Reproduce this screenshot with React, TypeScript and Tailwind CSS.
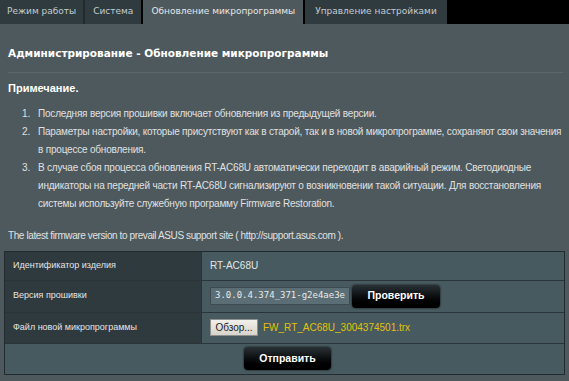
const tabs = [
  { label: "Режим работы", active: false },
  { label: "Система", active: false },
  { label: "Обновление микропрограммы", active: true },
  { label: "Управление настройками", active: false },
];

const notes = [
  "Последняя версия прошивки включает обновления из предыдущей версии.",
  "Параметры настройки, которые присутствуют как в старой, так и в новой микропрограмме, сохраняют свои значения в процессе обновления.",
  "В случае сбоя процесса обновления RT-AC68U автоматически переходит в аварийный режим. Светодиодные индикаторы на передней части RT-AC68U сигнализируют о возникновении такой ситуации. Для восстановления системы используйте служебную программу Firmware Restoration.",
];

const dejavu = { fontFamily: '"DejaVu Sans", Verdana, sans-serif' };

function DarkButton({ children, className }: { children: React.ReactNode; className?: string }) {
  return (
    <button
      className={
        "h-[23px] rounded-[4px] bg-gradient-to-b from-[#2a3236] via-[#0b0e10] to-[#000] text-white text-[10.5px] font-bold shadow-[0_0_2px_#000] " +
        (className ?? "")
      }
    >
      {children}
    </button>
  );
}

export default function App() {
  return (
    <div
      className="w-[569px] h-[381px] overflow-hidden bg-[#4d595d] text-[#e8e8e8]"
      style={{ fontFamily: '"Liberation Sans", Arial, sans-serif' }}
    >
      {/* tabs */}
      <div className="flex h-[24px] bg-black" style={dejavu}>
        {tabs.map((t, i) => (
          <div
            key={t.label}
            className={
              "flex items-center text-[9px] " +
              (t.active
                ? "bg-[#4d595d] text-[#e6e6e6] border-x-2 border-black"
                : "bg-[#303b3f] text-[#c3cbcf]") +
              (i === 0 ? " px-[7px] border-r-2 border-[#222a2e]" : "") +
              (i === 1 || i === 2 ? " px-[8px]" : "") +
              (i === 3 ? " px-[10px]" : "")
            }
          >
            {t.label}
          </div>
        ))}
      </div>

      <div className="pl-2 pr-[4px] pt-[22px]">
        <h1 className="text-[10.5px] font-bold text-white leading-[14px]" style={dejavu}>
          Администрирование - Обновление микропрограммы
        </h1>
        <div className="mt-[12px] mr-[2px] h-px bg-[#3b4548] border-b border-[#5c676b]" />

        <p className="mt-[7px] text-[11px] font-bold text-white">Примечание.</p>
        <ol className="mt-[8px] text-[10px] tracking-[-0.2px] leading-[18px] text-[#e0e0e0]">
          {notes.map((n, i) => (
            <li key={i} className="flex">
              <span className="w-[30px] shrink-0 pl-[14px]">{i + 1}.</span>
              <span>{n}</span>
            </li>
          ))}
        </ol>

        <p className="mt-[15px] text-[10px] tracking-[-0.4px] text-[#e0e0e0]">
          The latest firmware version to prevail ASUS support site ( http://support.asus.com ).
        </p>
      </div>

      {/* table */}
      <div className="mx-[4px] mt-[8px] border border-[#222b2f] bg-[#475a5f] text-[9px]">
        <div className="grid grid-cols-[196px_1fr] h-[29px] border-b border-[#2b3539]">
          <div className="bg-[#2f3a3e] pl-[8px] flex items-center text-[#e4e4e4]">
            Идентификатор изделия
          </div>
          <div className="pl-[8px] flex items-center text-[10px] text-[#e4e4e4] border-l border-[#2b3539]">
            RT-AC68U
          </div>
        </div>
        <div className="grid grid-cols-[196px_1fr] h-[32px] border-b border-[#2b3539]">
          <div className="bg-[#2f3a3e] pl-[8px] flex items-center text-[#e4e4e4]">
            Версия прошивки
          </div>
          <div className="pl-[8px] flex items-center gap-[2px] border-l border-[#2b3539]">
            <div
              className="w-[140px] h-[18px] bg-[#5b6e75] border border-[#3d4a4f] flex items-center pl-[4px] text-[9px] text-[#e8e8e8] whitespace-nowrap"
              style={{ fontFamily: '"DejaVu Sans Mono", monospace' }}
            >
              3.0.0.4.374_371-g2e4ae3e
            </div>
            <DarkButton className="w-[88px]">Проверить</DarkButton>
          </div>
        </div>
        <div className="grid grid-cols-[196px_1fr] h-[31px] border-b border-[#2b3539]">
          <div className="bg-[#2f3a3e] pl-[8px] flex items-center text-[#e4e4e4]">
            Файл новой микропрограммы
          </div>
          <div className="pl-[8px] flex items-center gap-[5px] border-l border-[#2b3539]">
            <button className="h-[17px] w-[48px] bg-gradient-to-b from-[#f2f0ea] to-[#d8d4cb] border border-[#8f8f8f] text-[10px] text-[#222]">
              Обзор...
            </button>
            <span className="text-[10px] text-[#e2c20a]">FW_RT_AC68U_3004374501.trx</span>
          </div>
        </div>
        <div className="h-[30px] flex items-center justify-center">
          <DarkButton className="w-[87px] ml-[6px]">Отправить</DarkButton>
        </div>
      </div>
    </div>
  );
}
